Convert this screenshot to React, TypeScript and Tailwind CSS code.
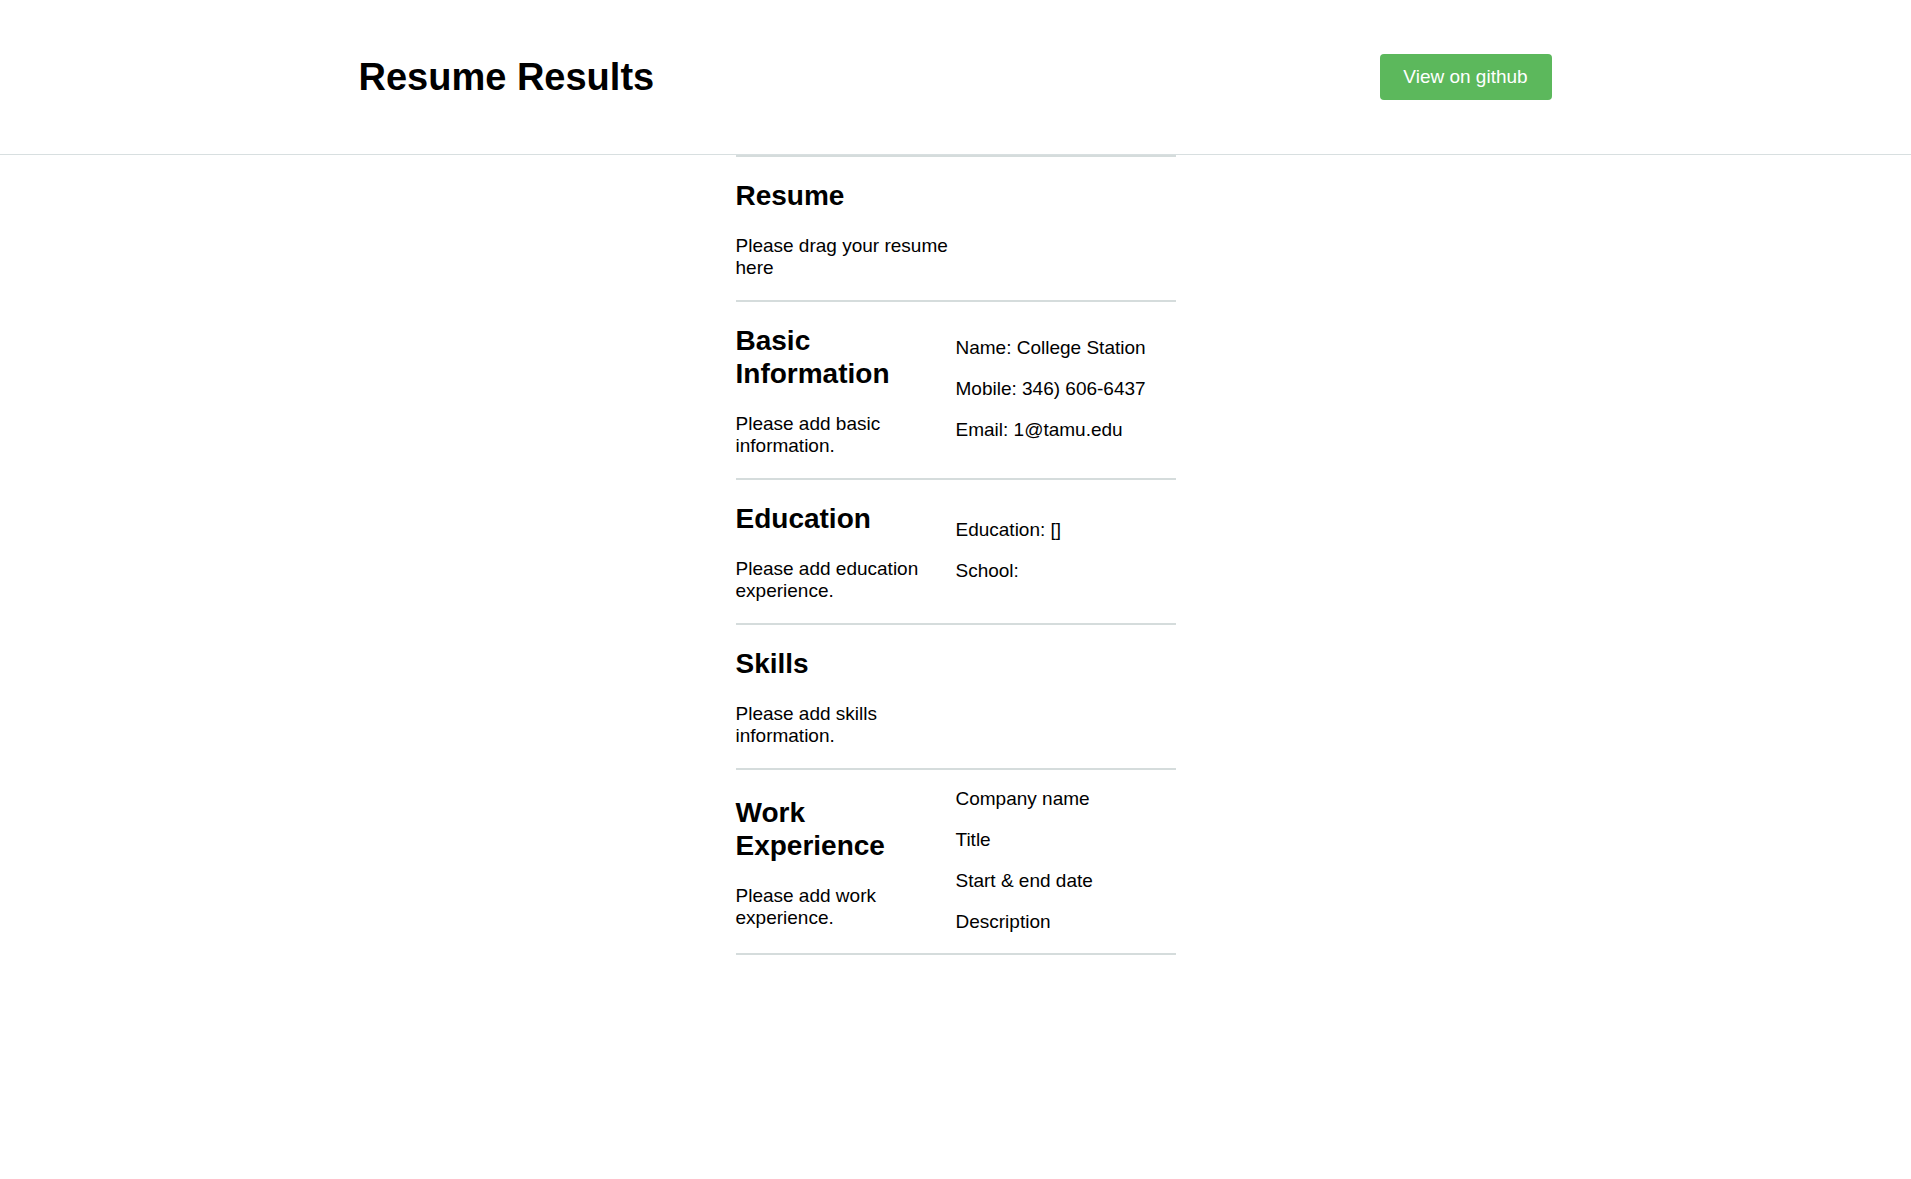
import React from "react";

interface Section {
  title: string;
  hint: string;
  details: string[];
}

const sections: Section[] = [
  { title: "Resume", hint: "Please drag your resume here", details: [] },
  {
    title: "Basic Information",
    hint: "Please add basic information.",
    details: ["Name: College Station", "Mobile: 346) 606-6437", "Email: 1@tamu.edu"],
  },
  { title: "Education", hint: "Please add education experience.", details: ["Education: []", "School:"] },
  { title: "Skills", hint: "Please add skills information.", details: [] },
  {
    title: "Work Experience",
    hint: "Please add work experience.",
    details: ["Company name", "Title", "Start & end date", "Description"],
  },
];

const App: React.FC = () => {
  return (
    <div className="min-h-screen bg-white text-black font-['Liberation_Sans',Arial,sans-serif]">
      <header className="border-b border-[#d8dfe0]">
        <div className="w-[1194px] h-[154px] mx-auto pr-[1px] flex items-center justify-between">
          <h1 className="text-[38px] font-bold leading-[44px]">Resume Results</h1>
          <a
            href="#"
            className="w-[172px] h-[46px] flex items-center justify-center rounded bg-[#5cb85c] text-white text-[19px]"
          >
            View on github
          </a>
        </div>
      </header>

      <main className="w-[440px] mx-auto border-b-2 border-[#d5dcdc]">
        {sections.map((section) => (
          <section key={section.title} className="flex items-center border-t-2 border-[#d5dcdc]">
            <div className="w-[220px] shrink-0">
              <h2 className="mt-[22px] text-[28px] font-bold leading-[33px] pr-4">{section.title}</h2>
              <p className="mt-[23px] mb-[21px] text-[19px] leading-[22px]">{section.hint}</p>
            </div>
            {section.details.length > 0 && (
              <div className="w-[220px] flex flex-col gap-[19px] pt-[18px] pb-[20px]">
                {section.details.map((line) => (
                  <p key={line} className="text-[19px] leading-[22px]">
                    {line}
                  </p>
                ))}
              </div>
            )}
          </section>
        ))}
      </main>
    </div>
  );
};

export default App;
